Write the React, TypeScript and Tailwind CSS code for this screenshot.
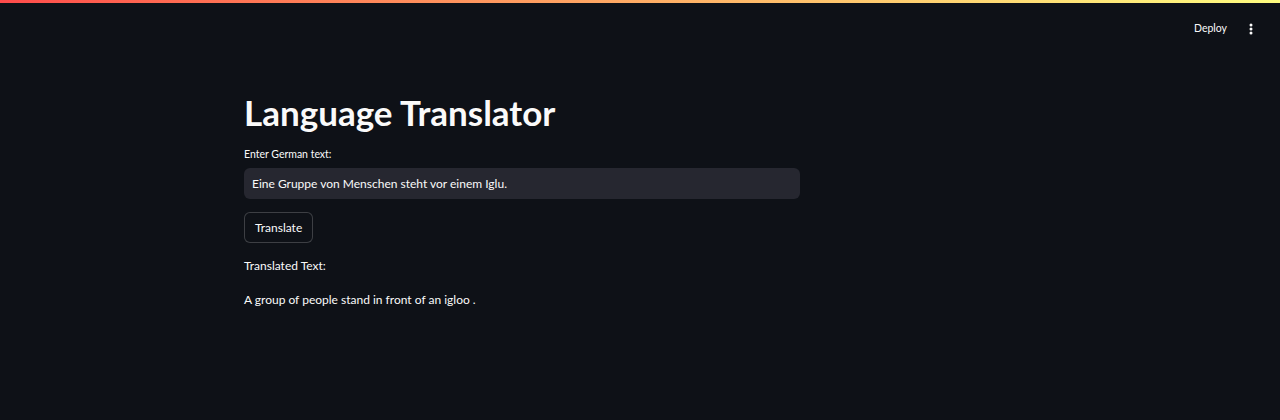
export default function App() {
  return (
    <div
      className="min-h-screen h-[420px] bg-[#0e1117] text-[#fafafa] relative"
      style={{ fontFamily: '"Source Sans Pro", Lato, sans-serif' }}
    >
      <div className="h-[3px] bg-gradient-to-r from-[#ff4b4b] to-[#fffd80]" />

      <header className="flex justify-end items-center h-[52px] pr-[22px] gap-[14px]">
        <button className="text-[10.5px] text-[#fafafa] px-2 py-1">Deploy</button>
        <svg width="4" height="12" viewBox="0 0 4 12" className="mr-[5px]">
          <circle cx="2" cy="2" r="1.5" fill="#fafafa" />
          <circle cx="2" cy="6" r="1.5" fill="#fafafa" />
          <circle cx="2" cy="10" r="1.5" fill="#fafafa" />
        </svg>
      </header>

      <main className="w-[556px] ml-[244px] pt-[36px]">
        <h1 className="text-[35px] font-bold leading-[42px] text-[#fafafa]">
          Language Translator
        </h1>

        <label className="block text-[10.5px] text-[#fafafa] mt-[14px] leading-[14px]">
          Enter German text:
        </label>
        <div className="mt-[7px] h-[31px] rounded-[6px] bg-[#262730] flex items-center px-[8px] text-[12px]">
          Eine Gruppe von Menschen steht vor einem Iglu.
        </div>

        <button className="mt-[13px] h-[31px] px-[10px] rounded-[6px] border border-[#fafafa]/20 text-[12px] bg-[#0e1117]">
          Translate
        </button>

        <p className="mt-[15px] text-[12px] leading-[16px]">Translated Text:</p>
        <p className="mt-[18px] text-[12px] leading-[16px]">
          A group of people stand in front of an igloo .
        </p>
      </main>
    </div>
  );
}
